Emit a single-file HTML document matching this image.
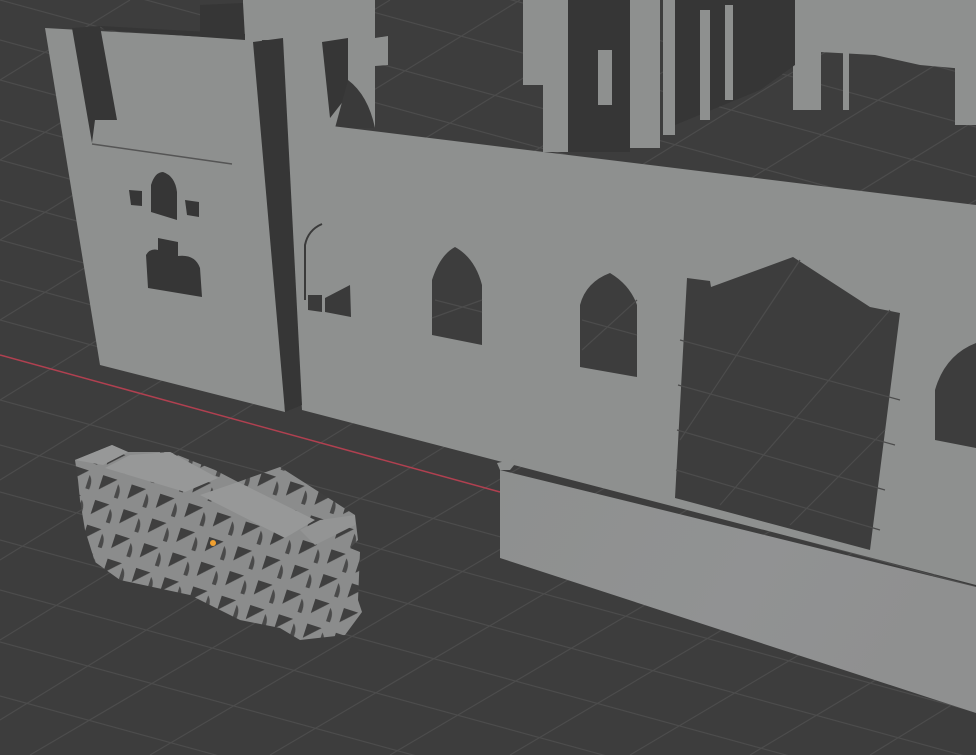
<!DOCTYPE html>
<html><head><meta charset="utf-8"><style>
html,body{margin:0;padding:0;background:#3d3d3d;overflow:hidden;width:976px;height:755px}
svg{display:block;position:absolute;left:0;top:0}
</style></head><body>
<svg width="976" height="755" viewBox="0 0 976 755" xmlns="http://www.w3.org/2000/svg">
<defs>
<linearGradient id="blk" x1="0" y1="0" x2="1" y2="0.3">
<stop offset="0" stop-color="#8e908f"/><stop offset="0.6" stop-color="#919293"/><stop offset="1" stop-color="#8f9090"/>
</linearGradient>
<pattern id="holes" width="30" height="26" patternUnits="userSpaceOnUse" patternTransform="rotate(18)">
<rect width="30" height="26" fill="#8b8c8c"/>
<path d="M5 4 L20 4 L5 19 Z" fill="#3f3f3f"/>
<path d="M22 8 Q27 12 26 22 L22 22 Z" fill="#4a4a4a"/>
</pattern>
</defs>
<rect width="976" height="755" fill="#3d3d3d"/>
<!-- grid -->
<g stroke="#4c4c4c" stroke-width="1.2" fill="none">
<path d="M0 -40 L976 227"/><path d="M0 0 L976 267"/><path d="M0 40 L976 307"/><path d="M0 80 L976 347"/>
<path d="M0 120 L976 387"/><path d="M0 160 L976 427"/><path d="M0 200 L976 467"/><path d="M0 240 L976 507"/>
<path d="M0 280 L976 547"/><path d="M0 320 L976 587"/><path d="M0 400 L976 667"/><path d="M0 445 L976 712"/>
<path d="M0 492 L976 759"/><path d="M0 540 L976 807"/><path d="M0 590 L976 857"/><path d="M0 642 L976 909"/>
<path d="M0 696 L976 963"/><path d="M0 -90 L976 177"/><path d="M0 -140 L976 127"/><path d="M0 -190 L976 77"/>
<path d="M0 80 L130 0"/><path d="M0 160 L260 0"/><path d="M0 240 L390 0"/><path d="M0 320 L520 0"/>
<path d="M0 400 L650 0"/><path d="M0 480 L780 0"/><path d="M0 560 L910 0"/><path d="M0 640 L976 40"/>
<path d="M0 720 L976 120"/><path d="M30 755 L976 200"/><path d="M150 755 L976 270"/><path d="M270 755 L976 340"/>
<path d="M390 755 L976 410"/><path d="M510 755 L976 480"/><path d="M630 755 L976 550"/><path d="M750 755 L976 620"/>
<path d="M870 755 L976 690"/>
</g>
<path d="M0 355 L500 492" stroke="#b04050" stroke-width="1.5"/>
<!-- far buildings -->
<g fill="#8e908f">
<rect x="523" y="0" width="20" height="85"/>
<rect x="543" y="0" width="25" height="152"/>
<rect x="630" y="0" width="30" height="148"/>
<rect x="663" y="0" width="12" height="135"/>
<rect x="793" y="0" width="28" height="110"/>
<path d="M820 0 L976 0 L976 70 L920 65 L875 55 L820 52 Z"/>
<rect x="955" y="0" width="21" height="125"/>
<rect x="843" y="0" width="6" height="110"/>
</g>
<g fill="#363636">
<rect x="568" y="0" width="62" height="152"/>
<path d="M675 0 L795 0 L795 65 L760 90 L675 125 Z"/>
</g>
<g fill="#8e908f">
<rect x="598" y="50" width="14" height="55"/>
<rect x="700" y="10" width="10" height="110"/>
<rect x="725" y="5" width="8" height="95"/>
</g>
<!-- back piece behind tower -->
<path d="M243 0 L375 0 L375 38 L388 36 L388 65 L375 66 L375 128 L280 128 L280 40 L243 40 Z" fill="#8e908f"/>
<path d="M200 5 L243 3 L245 38 L200 35 Z" fill="#363636"/>
<path d="M322 42 L348 38 L348 95 L330 118 Z" fill="#363636"/>
<path d="M348 80 Q368 95 375 128 L335 128 Z" fill="#3a3a3a"/>
<!-- long wall -->
<path d="M283 120 L976 205 L976 585 L302 410 Z" fill="#8e908f"/>
<!-- windows -->
<path d="M432 335 L432 280 Q440 255 455 247 Q475 258 482 285 L482 345 Z" fill="#3d3d3d"/>
<path d="M580 367 L580 305 Q586 282 610 273 Q630 285 637 305 L637 377 Z" fill="#3d3d3d"/>
<path d="M935 440 L935 390 Q945 355 976 343 L976 448 Z" fill="#3d3d3d"/>
<path d="M687 278 L710 281 L711 287 L793 257 L870 307 L900 313 L870 550 L675 498 Z" fill="#3d3d3d"/>
<g stroke="#4c4c4c" stroke-width="1.2" fill="none">
<path d="M680 340 L900 400"/><path d="M678 385 L895 445"/><path d="M677 430 L885 490"/><path d="M676 470 L880 530"/>
<path d="M680 440 L800 260"/><path d="M720 505 L890 310"/><path d="M790 525 L885 430"/>
<path d="M435 300 L482 312"/><path d="M432 318 L482 300"/><path d="M582 320 L637 335"/><path d="M582 350 L637 300"/>
</g>
<path d="M308 295 L322 295 L322 312 L308 310 Z" fill="#3a3a3a"/>
<path d="M325 298 L350 285 L351 317 L325 312 Z" fill="#3a3a3a"/>
<path d="M305 300 L305 245 Q308 230 322 224" stroke="#3a3a3a" stroke-width="2" fill="none"/>
<!-- tower -->
<path d="M45 28 L262 40 L285 412 L100 365 Z" fill="#8e908f"/>
<path d="M253 42 L283 38 L302 405 L285 412 Z" fill="#363636"/>
<path d="M72 28 L100 26 L117 120 L95 120 L92 143 Z" fill="#363636"/>
<path d="M100 26 L245 34 L245 40 L105 30 Z" fill="#363636"/>
<path d="M92 144 L232 164" stroke="#555" stroke-width="1.5"/>
<path d="M151 212 L151 185 Q155 172 163 172 Q175 176 177 192 L177 220 Z" fill="#363636"/>
<path d="M129 190 L142 191 L142 206 L131 205 Z" fill="#363636"/>
<path d="M185 200 L199 202 L199 217 L187 215 Z" fill="#363636"/>
<path d="M148 288 L146 255 Q150 248 158 250 L158 238 L178 242 L178 256 Q195 254 200 268 L202 297 Z" fill="#363636"/>
<!-- front low block -->
<path d="M500 470 L976 587 L976 713 L500 558 Z" fill="url(#blk)"/>
<path d="M497 463 L520 458 L510 470 L500 470 Z" fill="#8e908f"/>
<!-- puzzle object -->
<path d="M78 480 L75 460 L112 445 L128 452 L170 452 L215 470 L238 482 L280 467 L355 515 L358 540 L350 548 L360 552 L358 600 L362 612 L345 635 L300 640 L280 628 L240 620 L190 595 L120 580 L95 562 L85 530 L80 500 Z" fill="url(#holes)"/>
<path d="M75 460 L112 445 L128 452 L103 465 Z" fill="#979898"/>
<path d="M105 468 L130 455 L170 452 L218 478 L185 492 Z" fill="#979898"/>
<path d="M200 495 L238 482 L315 520 L285 538 Z" fill="#979898"/>
<path d="M300 530 L320 520 L355 515 L355 525 L315 545 Z" fill="#939494"/>
<circle cx="213" cy="543" r="3" fill="#f0a030"/>
</svg>
</body></html>
